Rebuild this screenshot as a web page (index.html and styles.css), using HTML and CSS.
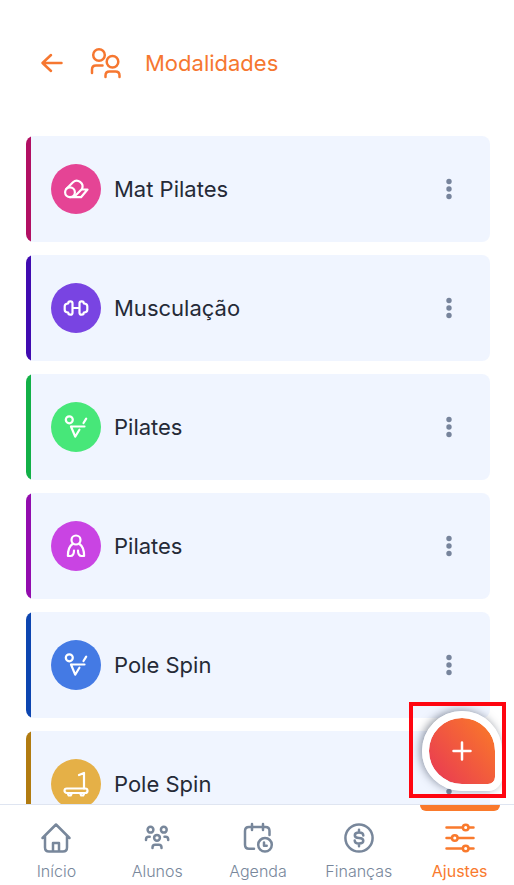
FILE: index.html
```html
<!DOCTYPE html>
<html lang="pt-BR">
<head>
<meta charset="utf-8">
<meta name="viewport" content="width=device-width, initial-scale=1">
<title>Modalidades</title>
<link rel="stylesheet" href="styles.css">
</head>
<body>
<svg class="sprite" aria-hidden="true">
  <symbol id="dots" viewBox="0 0 24 24"><g fill="currentColor" stroke="none"><circle cx="12" cy="4.500" r="2.700"/><circle cx="12" cy="12" r="2.700"/><circle cx="12" cy="19.500" r="2.700"/></g></symbol>
  <symbol id="pose" viewBox="0 0 28 28"><circle cx="7.300" cy="6.800" r="3.500"/><path d="M9 13.500h13.500M9 13.500l4.200 10.200 4.200-7M21.500 10l2.700-4.300"/></symbol>
</svg>
<div class="app">
  <header class="header">
    <button class="back" type="button" aria-label="Voltar">
      <svg class="icon-back" viewBox="0 0 24 24"><path d="M21.500 12H2.500M11 4L2.500 12l8.500 8"/></svg>
    </button>
    <svg class="icon-people" viewBox="0 0 32 32" aria-hidden="true"><circle cx="9" cy="8" r="5.800"/><circle cx="22.500" cy="14.700" r="5.800"/><path d="M2 26v-3.500q0-4 4-4h6.500M15.500 30v-1.500q0-4 4-4h6q4 0 4 4V30"/></svg>
    <h1 class="title">Modalidades</h1>
  </header>
  <main class="content">
    <ul class="list">
      <li class="card pink">
        <span class="avatar"><svg class="glyph" viewBox="0 0 28 28"><circle cx="8" cy="17.300" r="4.900"/><path d="M4.200 14l6.800-6.800c4.500-4 11.500 1 9 6.800l-7.500 7.500M8 22.200h11l6.500-7.700h-5.200"/></svg></span>
        <span class="name">Mat Pilates</span>
        <button class="more" type="button" aria-label="Opções de Mat Pilates"><svg viewBox="0 0 24 24"><use href="#dots"/></svg></button>
      </li>
      <li class="card violet">
        <span class="avatar"><svg class="glyph" viewBox="0 0 28 28"><path d="M10.500 14h7M10.500 9.300q0-2-2-2h-.3q-2 0-2 2.200-3.500 0-3.500 2.700v3.600q0 2.700 3.500 2.700 0 2.200 2 2.200h.3q2 0 2-2zM17.500 9.300q0-2 2-2h.3q2 0 2 2.200 3.500 0 3.500 2.700v3.600q0 2.700-3.500 2.700 0 2.200-2 2.200h-.3q-2 0-2-2z"/></svg></span>
        <span class="name">Musculação</span>
        <button class="more" type="button" aria-label="Opções de Musculação"><svg viewBox="0 0 24 24"><use href="#dots"/></svg></button>
      </li>
      <li class="card green">
        <span class="avatar"><svg class="glyph" viewBox="0 0 28 28"><use href="#pose"/></svg></span>
        <span class="name">Pilates</span>
        <button class="more" type="button" aria-label="Opções de Pilates"><svg viewBox="0 0 24 24"><use href="#dots"/></svg></button>
      </li>
      <li class="card magenta">
        <span class="avatar"><svg class="glyph" viewBox="0 0 28 28"><circle cx="14" cy="8" r="4.500"/><path d="M10.500 12C7.500 14 5.900 18 5.900 24h2.600c2.500 0 3.500-1.500 3.500-5.500M17.500 12c3 2 4.600 6 4.600 12h-2.600c-2.500 0-3.500-1.500-3.500-5.500"/></svg></span>
        <span class="name">Pilates</span>
        <button class="more" type="button" aria-label="Opções de Pilates"><svg viewBox="0 0 24 24"><use href="#dots"/></svg></button>
      </li>
      <li class="card blue">
        <span class="avatar"><svg class="glyph" viewBox="0 0 28 28"><use href="#pose"/></svg></span>
        <span class="name">Pole Spin</span>
        <button class="more" type="button" aria-label="Opções de Pole Spin"><svg viewBox="0 0 24 24"><use href="#dots"/></svg></button>
      </li>
      <li class="card gold">
        <span class="avatar"><svg class="glyph" viewBox="0 0 28 28"><rect x="2.500" y="18.500" width="23" height="4.500" rx="2.250"/><path d="M17 5l5-2v15.500M6 24l.7 1.500h2L9.500 24M18.500 24l.7 1.500h2L22 24"/></svg></span>
        <span class="name">Pole Spin</span>
        <button class="more" type="button" aria-label="Opções de Pole Spin"><svg viewBox="0 0 24 24"><use href="#dots"/></svg></button>
      </li>
    </ul>
  </main>
  <div class="highlight">
    <button class="fab" type="button" aria-label="Adicionar modalidade"><svg viewBox="0 0 20 20"><path d="M10 1.500v17M1.500 10h17"/></svg></button>
  </div>
  <nav class="tabs">
    <a class="tab" href="#inicio"><svg viewBox="0 0 32 32"><path d="M2.500 16L16 2.500 29.500 16M5 14v11.500q0 4 4 4h14q4 0 4-4V14M13 29v-8h6v8"/></svg>Início</a>
    <a class="tab" href="#alunos"><svg viewBox="0 0 32 32"><circle cx="9.500" cy="7.700" r="2.900"/><circle cx="22.800" cy="7.700" r="2.900"/><circle cx="16" cy="15.800" r="2.900"/><path d="M5 18v-.5q0-2.700 2.700-2.700h1M27.200 18v-.5q0-2.700-2.700-2.700h-1M11.500 26v-.5q0-2.700 2.700-2.700h3.600q2.700 0 2.700 2.700v.5"/></svg>Alunos</a>
    <a class="tab" href="#agenda"><svg viewBox="0 0 32 32"><path d="M12 26.800H7q-4 0-4-4V9q0-4 4-4h16.500q4 0 4 4v4M10 2v6M21 2v6"/><circle cx="23" cy="22.800" r="6.800"/><path d="M22 20.500v3.300h2.700"/></svg>Agenda</a>
    <a class="tab" href="#financas"><svg viewBox="0 0 32 32"><circle cx="16" cy="16" r="13.600"/><path d="M16 7.800v2.700M16 21.500v2.700M20.300 13.500q0-3-4.300-3-4.200 0-4.200 2.800Q11.800 16 16 16t4.300 2.800q0 2.700-4.300 2.700-4.300 0-4.300-3"/></svg>Finanças</a>
    <a class="tab active" href="#ajustes" aria-current="page"><svg viewBox="0 0 32 32"><path d="M2.500 5.500h16M25 5.500h4.500M2.500 16h5M14 16h15.500M2.500 26.500h16M25 26.500h4.500"/><circle cx="21.700" cy="5.500" r="2.800"/><circle cx="10.800" cy="16" r="2.800"/><circle cx="21.700" cy="26.500" r="2.800"/></svg>Ajustes</a>
  </nav>
</div>
</body>
</html>
```

FILE: styles.css
```css
* { box-sizing: border-box; }

body {
  margin: 0;
  background: #fff;
  color: #252a37;
  font-family: Inter, "Liberation Sans", sans-serif;
}

button {
  padding: 0;
  border: 0;
  background: none;
  color: inherit;
}

svg {
  display: block;
  fill: none;
  stroke: currentColor;
  stroke-width: 2.5;
  stroke-linecap: round;
  stroke-linejoin: round;
}

.sprite {
  position: absolute;
  width: 0;
  height: 0;
}

.app {
  position: relative;
  display: flex;
  flex-direction: column;
  height: 100vh;
}

.header {
  display: flex;
  align-items: center;
  height: 125px;
  flex: none;
  padding: 0 40px;
  color: #f67730;
}

.icon-back { width: 24px; height: 24px; }

.icon-people {
  width: 32px;
  height: 32px;
  margin: 0 23px 0 26px;
}

.title {
  margin: 0;
  font-size: 22px;
  line-height: 28px;
  font-weight: 400;
}

.content {
  flex: 1;
  min-height: 0;
  overflow: hidden;
  padding: 11px 24px 0 26px;
}

.list {
  display: flex;
  flex-direction: column;
  gap: 13px;
  margin: 0;
  padding: 0;
  list-style: none;
}

.card {
  display: flex;
  align-items: center;
  flex: none;
  gap: 13px;
  height: 106px;
  padding: 0 29px 0 25px;
  border-radius: 8px;
  background: linear-gradient(to right, var(--edge) 5px, #f0f5ff 5px);
}

.avatar {
  display: grid;
  place-items: center;
  width: 50px;
  height: 50px;
  border-radius: 50%;
  background: var(--fill);
  color: #fff;
}

.glyph {
  width: 28px;
  height: 28px;
  stroke-width: 2.2;
}

.name {
  flex: 1;
  font-size: 22px;
  line-height: 28px;
}

.more { color: #77849c; }
.more svg { width: 24px; height: 24px; }

.pink { --edge: #b10f63; --fill: #e54495; }
.violet { --edge: #400bb0; --fill: #7944e2; }
.green { --edge: #12b047; --fill: #47e779; }
.magenta { --edge: #920cae; --fill: #c944e3; }
.blue { --edge: #0d45b0; --fill: #447ae4; }
.gold { --edge: #b17b11; --fill: #e5b047; }

.highlight {
  position: absolute;
  right: 8px;
  bottom: 87px;
  width: 97px;
  height: 96px;
  border: 4px solid #ff0510;
  padding: 5px 0 0 9px;
  overflow: hidden;
}

.fab {
  display: grid;
  place-items: center;
  width: 80px;
  height: 80px;
  border: 7px solid #fff;
  border-radius: 50% 50% 14px 50%;
  background: linear-gradient(50deg, #e73358 5%, #f8732d 80%) border-box;
  background-clip: padding-box;
  box-shadow: -2px -1px 8px rgba(40, 50, 70, 0.5);
  color: #fff;
}

.fab svg { width: 20px; height: 20px; }

.tabs {
  display: grid;
  grid-template-columns: repeat(5, 1fr);
  flex: none;
  height: 81px;
  padding: 0 4px 0 6px;
  border-top: 1px solid #dfe5f1;
  background: #fff;
}

.tab {
  position: relative;
  display: flex;
  flex-direction: column;
  align-items: center;
  gap: 6px;
  padding-top: 17px;
  color: #78879b;
  font-size: 16px;
  line-height: 22px;
  font-weight: 300;
  text-decoration: none;
}

.tab svg { width: 32px; height: 32px; }

.active {
  color: #f97a2d;
  font-weight: 400;
}

.active::before {
  content: "";
  position: absolute;
  top: 0;
  width: 80px;
  height: 6px;
  border-radius: 0 0 7px 7px;
  background: #fa7a2c;
}
```
